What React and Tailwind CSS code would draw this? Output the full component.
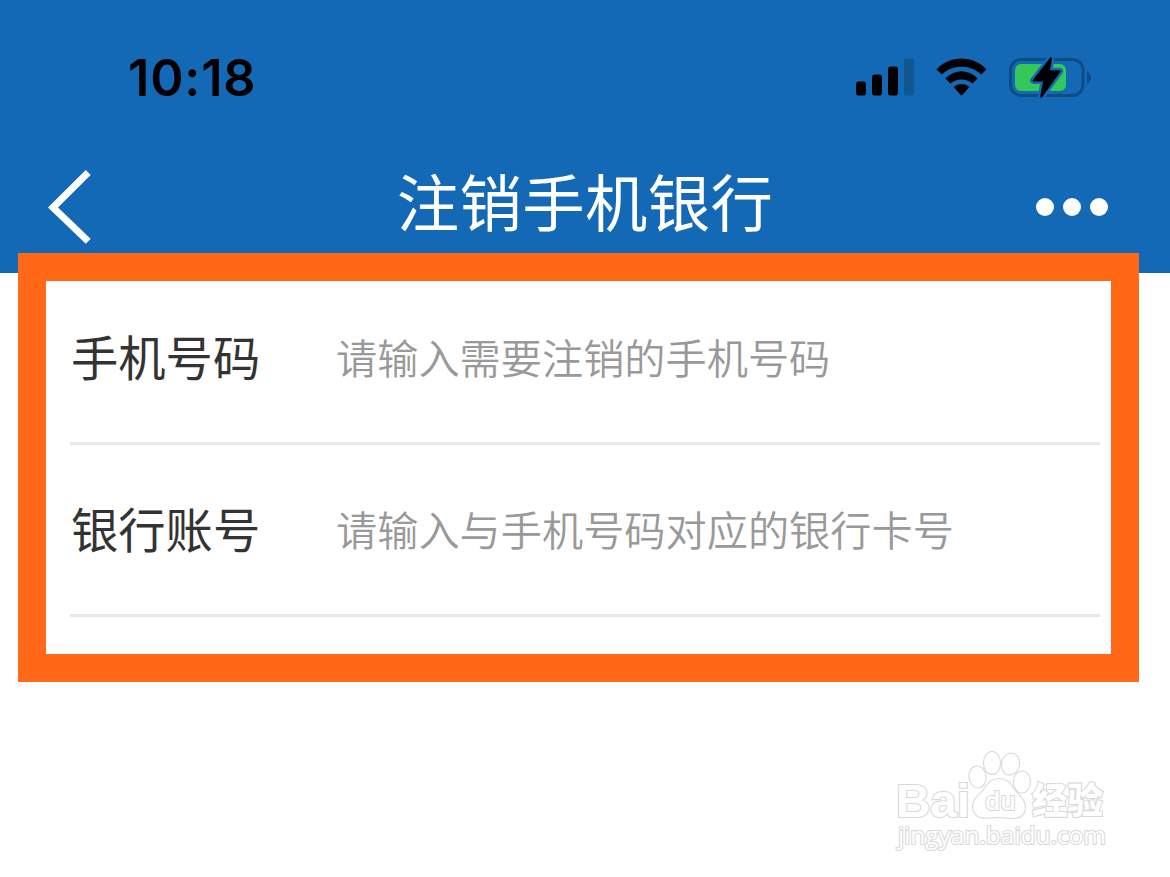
import React from 'react';

const fields = [
    { id: 'phone', label: '手机号码', placeholder: '请输入需要注销的手机号码' },
    { id: 'account', label: '银行账号', placeholder: '请输入与手机号码对应的银行卡号' },
];

const SignalIcon = () => (
    <svg width="58" height="38" viewBox="0 0 58 38">
        <rect x="0" y="23.5" width="10" height="14" rx="2.8" />
        <rect x="16" y="16.5" width="10" height="21" rx="2.8" />
        <rect x="32" y="8.5" width="10" height="29" rx="2.8" />
        <rect x="48" y="0.5" width="10" height="37" rx="2.8" fill="#10568f" />
    </svg>
);

const WifiIcon = () => (
    <svg width="52" height="38" viewBox="0 0 52 38">
        <path d="M0.6 11.4C14 -3 37 -3 50.4 11.4L45.2 16.6C34.8 6 16.2 6 5.8 16.6Z" />
        <path d="M9.4 20.4C19 11 32 11 41.6 20.4L36.4 25.6C30.6 20 20.4 20 14.6 25.6Z" />
        <path d="M17.6 29C22.2 25 28.8 25 33.4 29L26.6 36.8Q25.5 37.8 24.4 36.8Z" />
    </svg>
);

const BatteryIcon = () => (
    <svg width="83" height="43" viewBox="0 0 83 43">
        <rect x="1.5" y="3.5" width="72.5" height="36" rx="10.5" fill="none" stroke="#0f4c84" strokeWidth="3" />
        <rect x="6" y="8" width="51" height="27" rx="6" fill="#34c759" />
        <path d="M78 15Q82 17.5 82 21.5Q82 25.5 78 28Z" fill="#0f4c84" />
        <path
            d="M42 2.2L24.6 24.6H35.2L32.2 40.8L50.6 15.2H39.8Z"
            stroke="#1469b7"
            strokeWidth="7"
            strokeLinejoin="round"
        />
        <path d="M42 2.2L24.6 24.6H35.2L32.2 40.8L50.6 15.2H39.8Z" stroke="#000" strokeWidth="2" strokeLinejoin="round" />
    </svg>
);

const StatusBar = () => (
    <div className="flex h-[140px] items-start justify-between pt-14 pr-[78px] pl-[128px]">
        <div className="mt-[-8px] font-['Inter',sans-serif] text-[50.5px] leading-[60px] font-semibold tracking-[0.8px] text-black">
            10:18
        </div>
        <div className="flex items-start">
            <div className="mt-[2px] mr-[22px]"><SignalIcon /></div>
            <div className="mt-[2px] mr-[21px]"><WifiIcon /></div>
            <BatteryIcon />
        </div>
    </div>
);

const NavBar = () => (
    <div className="grid grid-cols-[150px_1fr_150px] items-start">
        <button className="mt-[28px] ml-[46px] w-12" aria-label="返回">
            <svg width="48" height="78" viewBox="0 0 48 78" fill="none" stroke="white" strokeWidth="7">
                <path d="M42.2 4.6L7 39.4L42.2 73.2" />
            </svg>
        </button>
        <h1 className="mt-[15px] text-center text-[62.4px] leading-[90px] font-normal tracking-[0.4px] whitespace-nowrap text-white">
            注销手机银行
        </h1>
        <button className="mt-[58px] ml-4 flex gap-[9px]" aria-label="更多">
            <span className="size-[18px] rounded-full bg-white" />
            <span className="size-[18px] rounded-full bg-white" />
            <span className="size-[18px] rounded-full bg-white" />
        </button>
    </div>
);

const FieldRow = ({ label, placeholder }) => (
    <div className="flex h-[172px] items-center border-b-3 border-[#e8e8e8] pb-1">
        <span className="w-[266px] pl-px text-[47.3px] leading-[60px] text-[#333]">{label}</span>
        <span className="text-[41.2px] leading-[60px] font-[350] whitespace-nowrap text-[#999]">{placeholder}</span>
    </div>
);

const Watermark = () => (
    <svg
        width="224"
        height="124"
        viewBox="0 0 224 124"
        fill="white"
        stroke="#d9d9d9"
        strokeWidth="2.2"
        className="[paint-order:stroke]"
    >
        <text x="5" y="66.5" fontSize="46" fontWeight="700" textLength="74" lengthAdjust="spacingAndGlyphs" className="font-['Liberation_Sans',sans-serif]">Bai</text>
        <ellipse cx="86.5" cy="27" rx="8" ry="10.5" transform="rotate(-8 86.5 27)" />
        <ellipse cx="101" cy="13" rx="8" ry="11" />
        <ellipse cx="119.5" cy="14" rx="8.5" ry="10.5" transform="rotate(12 119.5 14)" />
        <ellipse cx="131" cy="32" rx="8" ry="10.5" />
        <path d="M108 29C98 29 96 37 90 43C83 49 80 56 84 63C88 70 98 67 108 67C118 67 129 71 133 62C136 54 131 48 125 42C120 36 118 29 108 29Z" />
        <text x="94" y="60" fontSize="26" fontWeight="600" textLength="31" lengthAdjust="spacingAndGlyphs" className="font-['Open_Sans',sans-serif]">du</text>
        <text x="141" y="64" fontSize="36" fontWeight="900" textLength="71" lengthAdjust="spacingAndGlyphs" className="font-['Noto_Sans_CJK_SC',sans-serif]">经验</text>
        <text x="7" y="94" fontSize="24" fontWeight="500" textLength="208" lengthAdjust="spacingAndGlyphs" className="font-['Open_Sans',sans-serif]">jingyan.baidu.com</text>
    </svg>
);

const App = () => (
    <div className="flex h-[877px] w-[1170px] flex-col overflow-hidden bg-white font-['Noto_Sans_CJK_SC',sans-serif]">
        <header className="h-[273px] shrink-0 bg-[#1469b7]">
            <StatusBar />
            <NavBar />
        </header>
        {/* Highlight frame, pulled up over the header's bottom edge */}
        <main className="z-10 mt-[-20px] ml-[18px] h-[429px] w-[1121px] shrink-0 border-28 border-[#ff6918] bg-white pr-[11px] pl-6">
            <div className="mt-[-8px]">
                {fields.map((field) => (
                    <FieldRow key={field.id} label={field.label} placeholder={field.placeholder} />
                ))}
            </div>
        </main>
        <footer className="mt-[68px] mr-[55px] flex justify-end">
            <Watermark />
        </footer>
    </div>
);

export default App;
